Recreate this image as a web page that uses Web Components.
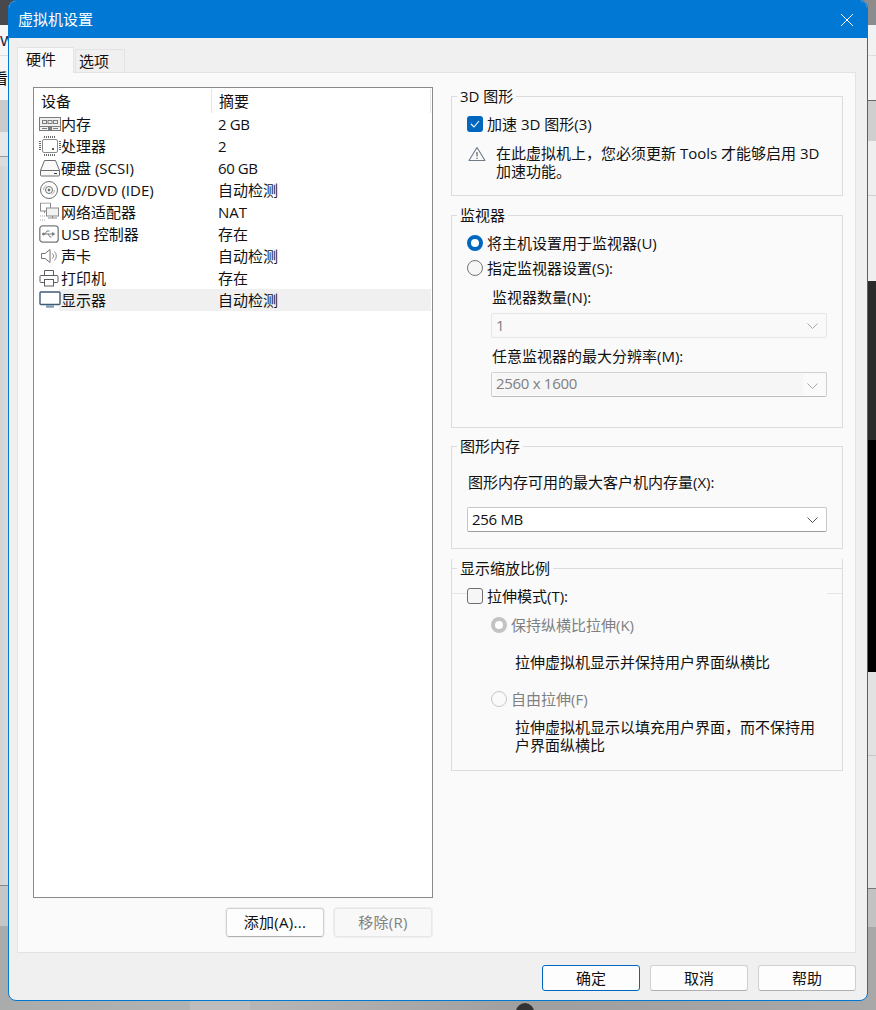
<!DOCTYPE html>
<html lang="zh"><head><meta charset="utf-8"><style>
html,body{margin:0;padding:0;width:876px;height:1010px;overflow:hidden;background:#9a9a9a}
body{font:15px/18px "Open Sans","Noto Sans CJK SC",sans-serif;color:#111;position:relative}
</style></head><body>
<vm-desktop>
<vm-dialog heading="虚拟机设置">
  <vm-tabs slot="tabs"></vm-tabs>
  <vm-devices slot="left"></vm-devices>
  <vm-group slot="right" label="3D 图形" style="height:100px">
    <vm-check checked style="margin:18px 0 0 15px">加速 3D 图形(3)</vm-check>
    <vm-warning style="margin:11px 0 0 16px">在此虚拟机上，您必须更新 Tools 才能够启用 3D 加速功能。</vm-warning>
  </vm-group>
  <vm-group slot="right" label="监视器" style="height:213px;margin-top:19px">
    <vm-radio on style="margin:18px 0 0 15px">将主机设置用于监视器(U)</vm-radio>
    <vm-radio style="margin:7px 0 0 15px">指定监视器设置(S):</vm-radio>
    <vm-field style="margin:11px 15px 0 39px" gap="7" label="监视器数量(N):" value="1" mode="off"></vm-field>
    <vm-field style="margin:9px 15px 0 39px" gap="7" label="任意监视器的最大分辨率(M):" value="2560 x 1600" mode="dim"></vm-field>
  </vm-group>
  <vm-group slot="right" label="图形内存" style="height:103px;margin-top:18px">
    <vm-field style="margin:26px 15px 0 15px" gap="16" label="图形内存可用的最大客户机内存量(X):" value="256 MB" mode="on"></vm-field>
  </vm-group>
  <vm-scale slot="right" style="margin-top:10px"></vm-scale>
  <vm-button slot="actions" primary>确定</vm-button>
  <vm-button slot="actions">取消</vm-button>
  <vm-button slot="actions">帮助</vm-button>
</vm-dialog>
</vm-desktop>
<script>
function def(name, css, html, init){
  customElements.define(name, class extends HTMLElement{
    connectedCallback(){
      if(this.shadowRoot) return;
      const r=this.attachShadow({mode:'open'});
      r.innerHTML='<style>'+css+'</style>'+(typeof html==='function'?html(this):html);
      if(init) init(r,this);
    }
  });
}
const ICONS={
mem:'<svg width="22" height="14" viewBox="0 0 22 14" fill="none" stroke="#7c7c7c"><rect x=".5" y=".5" width="21" height="13" fill="#f0f0f0"/><rect x="3.5" y="3.5" width="4" height="3"/><rect x="9" y="3.5" width="4" height="3"/><rect x="14.5" y="3.5" width="4" height="3"/><path d="M.5 9.5h21M3 11.5h5M14 11.5h5"/><rect x="9.5" y="10" width="3" height="3.5" fill="#7c7c7c"/></svg>',
cpu:'<svg width="22" height="20" viewBox="0 0 22 20" fill="none" stroke="#6f6f6f"><rect x="3.5" y="3.5" width="15" height="13" rx="1.5" stroke="#8a8a8a"/><path stroke-dasharray="1 1" stroke="#666" stroke-width="2" d="M5 1h12M5 19h12M1 5v10M21 5v10"/><rect x="13" y="12" width="2" height="2" fill="#555" stroke="none"/></svg>',
hdd:'<svg width="22" height="18" viewBox="0 0 22 18" fill="none" stroke="#6c6c6c"><path d="M5.500 1.500h11l4 10v4.500a1 1 0 0 1-1 1h-17a1 1 0 0 1-1-1v-4.500z" fill="#fafafa"/><path d="M1.500 11.500h19"/><path d="M15 14.500h3" stroke="#3a3a3a"/></svg>',
cd:'<svg width="20" height="20" viewBox="0 0 20 20" fill="none" stroke="#6f6f6f"><circle cx="10" cy="10" r="8.500"/><circle cx="10" cy="10" r="3.500"/><circle cx="10" cy="10" r="1" fill="#555"/><path d="M4.500 10a5.500 5.500 0 0 1 3-4.800" stroke="#aaa"/><path d="M15.500 10a5.500 5.500 0 0 1-3 4.800" stroke="#aaa"/></svg>',
net:'<svg width="20" height="19" viewBox="0 0 20 19" fill="none" stroke="#8a8a8a"><rect x="1.500" y=".5" width="10" height="8"/><rect x="7.500" y="5.500" width="12" height="8" fill="#f3f3f3"/><path d="M13.500 13.500v2M9 15.500h9M5.500 8.500v2"/><path d="M1 13.500h5M1 17.500h6" stroke-dasharray="1 1" stroke="#aaa"/></svg>',
usb:'<svg width="20" height="20" viewBox="0 0 20 20" fill="none" stroke="#7a7a7a"><rect x=".8" y="1.800" width="18.400" height="16.400" rx="3" stroke-width="1.300"/><path d="M4.500 10h11M6 10l2-3h2.500M9 10l2 3h1.500M15.500 10l-2-1.500v3z"/><circle cx="4.500" cy="10" r="1" fill="#7a7a7a"/></svg>',
snd:'<svg width="20" height="18" viewBox="0 0 20 18" fill="none" stroke="#747474"><path d="M2.500 6.500h3.500l5-4v13l-5-4h-3.500z"/><path d="M13.500 6.500a3.500 3.500 0 0 1 0 5M15.500 4.500a6.500 6.500 0 0 1 0 9" stroke="#909090"/></svg>',
prn:'<svg width="20" height="18" viewBox="0 0 20 18" fill="none" stroke="#5e5e5e"><path d="M5.500 6.500v-5h9v5"/><path d="M5 13.500h-3a1 1 0 0 1-1-1v-5a1 1 0 0 1 1-1h16a1 1 0 0 1 1 1v5a1 1 0 0 1-1 1h-3"/><rect x="5.500" y="10.500" width="9" height="6.500"/></svg>',
mon:'<svg width="22" height="18" viewBox="0 0 22 18" fill="none"><rect x="1" y="1" width="20" height="12.500" rx="1" fill="#fff" stroke="#3d5c78" stroke-width="1.400"/><path d="M7 15.500h8" stroke="#7e9ab0" stroke-width="2.400"/></svg>'};
const ROWS=[['mem','内存','2 GB'],['cpu','处理器','2'],['hdd','硬盘 (SCSI)','60 GB'],['cd','CD/DVD (IDE)','自动检测'],['net','网络适配器','NAT'],['usb','USB 控制器','存在'],['snd','声卡','自动检测'],['prn','打印机','存在'],['mon','显示器','自动检测']];

def('vm-desktop',`:host{display:block;position:absolute;inset:0;overflow:hidden;background:linear-gradient(90deg,#a9acab,#b5b5b5 30%,#9f9f9f 60%,#a8a8a8)}
 .p{position:absolute}`,`
 <div class="p" style="left:0;top:0;width:40px;height:25px;background:#47494c"></div>
 <div class="p" style="left:0;top:25px;width:40px;height:75px;background:#f6f6f6"></div>
 <div class="p" style="left:0;top:32px;font:15px 'Liberation Sans';color:#224">W</div>
 <div class="p" style="left:-7px;top:67px;font:15px 'Noto Sans CJK SC';color:#000">看</div>
 <div class="p" style="left:0;top:55px;width:40px;height:1px;background:#ddd"></div>
 <div class="p" style="left:0;top:100px;width:40px;height:32px;background:#cbcbcb"></div>
 <div class="p" style="left:0;top:132px;width:40px;height:24px;background:#e8e8e8"></div>
 <div class="p" style="left:0;top:156px;width:40px;height:10px;background:#dcdcdc;border-top:1px solid #999"></div>
 <div class="p" style="left:0;top:166px;width:40px;height:719px;background:linear-gradient(90deg,#d4d4d4,#efefef);border-bottom:1px solid #888"></div>
 <div class="p" style="left:0;top:886px;width:40px;height:40px;background:#c6c6c6"></div>
 <div class="p" style="left:840px;top:0;width:36px;height:25px;background:#8c8c8c"></div>
 <div class="p" style="left:840px;top:25px;width:36px;height:75px;background:#f2f2f2;border-bottom:1px solid #666"></div>
 <div class="p" style="left:840px;top:55px;width:36px;height:1px;background:#ddd"></div>
 <div class="p" style="left:840px;top:101px;width:36px;height:40px;background:#cfcfcf"></div>
 <div class="p" style="left:840px;top:141px;width:36px;height:140px;background:#efefef"></div>
 <div class="p" style="left:840px;top:195px;width:36px;height:1px;background:#d0d0d0"></div>
 <div class="p" style="left:840px;top:281px;width:36px;height:159px;background:#2b2b2b"></div>
 <div class="p" style="left:840px;top:440px;width:36px;height:232px;background:#000"></div>
 <div class="p" style="left:840px;top:672px;width:36px;height:216px;background:#e2e2e2"></div>
 <div class="p" style="left:840px;top:755px;width:36px;height:1px;background:#c8c8c8"></div>
 <div class="p" style="left:840px;top:888px;width:36px;height:38px;background:#c2c2c2;border-top:1px solid #777"></div>
 <div class="p" style="left:516px;top:1003px;width:18px;height:10px;background:#333;border-radius:10px 10px 0 0"></div>
 <div class="p" style="left:190px;top:1001px;width:60px;height:10px;background:#bdbdbd"></div>
 <slot></slot>`);

def('vm-dialog',`:host{display:flex;flex-direction:column;position:absolute;left:8px;top:0;width:860px;height:1001px;box-sizing:border-box;background:#f0f0f0;border:1px solid #0078d4;border-radius:8px;overflow:hidden}
 .title{flex:none;height:37px;margin:0 -1px;background:#0078d4;color:#fff;display:flex;align-items:center;justify-content:space-between;padding:0 14px 2px 10px;box-sizing:border-box}
 .title svg{margin-top:2px}
 .body{flex:1;display:flex;flex-direction:column;padding:9px 11px 0 8px}
 .panel{height:881px;box-sizing:border-box;margin-top:-1px;background:#fafafa;border:1px solid #e3e3e3;display:flex;padding:14px 12px 0 15px;}
 .l{width:400px;flex:none}.r{margin-left:18px;width:392px;padding-top:9px;display:flex;flex-direction:column}
 .act{display:flex;justify-content:flex-end;gap:10px;padding:12px 0 0 0}`,
 h=>`<div class="title"><span>${h.getAttribute('heading')}</span>
 <svg width="14" height="14" viewBox="0 0 14 14" stroke="#fff" fill="none"><path d="M1 1l12 12M13 1L1 13"/></svg></div>
 <div class="body"><slot name="tabs"></slot><div class="panel"><div class="l"><slot name="left"></slot></div><div class="r"><slot name="right"></slot></div></div>
 <div class="act"><slot name="actions"></slot></div></div>`);

def('vm-tabs',`:host{display:flex;align-items:flex-end;height:26px;position:relative;z-index:1}
 .t{box-sizing:border-box;display:flex;align-items:center}
 .a{width:57px;height:26px;background:#fafafa;border:1px solid #e3e3e3;border-bottom:0;padding:0 0 4px 8px}
 .b{width:50px;height:24px;margin:0 0 0 1px;border:1px solid #e3e3e3;background:#f0f0f0;padding-left:3px}`,
 `<div class="t a">硬件</div><div class="t b">选项</div>`);

def('vm-devices',`:host{display:block}
 .box{height:811px;box-sizing:border-box;border:1px solid #8a8a8a;background:#fff;padding:1px 1px 0 1px}
 .hd,.row{display:grid;grid-template-columns:176px 1fr;height:22px;align-items:center}
 .hd{height:24px;position:relative}
 .hd span+span{border-left:1px solid #e5e5e5;padding-left:7px;height:24px;line-height:24px}
 .hd span:first-child{padding-left:6px}
 .hd::after{content:"";position:absolute;right:0;top:0;height:24px;border-right:1px solid #e5e5e5}
 .row span+span{padding-left:7px}
 .row span.v{letter-spacing:-.4px}
 .n{display:flex;align-items:center;position:relative;padding-left:26px;height:22px}
 .n svg{position:absolute;left:4px;top:50%;transform:translateY(-50%)}
 .row.s{background:linear-gradient(90deg,#fff 24px,#f0f0f0 24px)}
 .btns{display:flex;justify-content:flex-end;gap:10px;padding:10px 1px 0 0}`,
 ()=>`<div class="box"><div class="hd"><span>设备</span><span>摘要</span></div>`+
 ROWS.map((r,i)=>`<div class="row${i==8?' s':''}"><span class="n">${ICONS[r[0]]}${r[1]}</span><span${/GB/.test(r[2])?' class="v"':''}>${r[2]}</span></div>`).join('')+
 `</div><div class="btns"><vm-button small>添加(A)...</vm-button><vm-button small disabled>移除(R)</vm-button></div>`);

def('vm-group',`:host{display:block;box-sizing:border-box;border:1px solid #dcdcdc;position:relative}
 .lg{position:absolute;left:5px;top:-10px;background:#fafafa;padding:0 3px;line-height:18px}
 .c{display:flex;flex-direction:column}`,
 h=>`<div class="lg">${h.getAttribute('label')}</div><div class="c"><slot></slot></div>`);

def('vm-check',`:host{display:flex;align-items:center;gap:4px;height:18px}
 .b{width:16px;height:16px;box-sizing:border-box;border-radius:3px;display:flex;align-items:center;justify-content:center}
 .on{background:#0067c0}.off{background:#f6f6f6;border:1px solid #6e6e6e}`,
 h=>`<div class="b ${h.hasAttribute('checked')?'on':'off'}">${h.hasAttribute('checked')?'<svg width="10" height="8" viewBox="0 0 10 8" fill="none" stroke="#fff" stroke-width="1.100"><path d="M1 4l3 3 5-6"/></svg>':''}</div><span><slot></slot></span>`);

def('vm-radio',`:host{display:flex;align-items:center;gap:4px;height:18px}
 .o{width:16px;height:16px;box-sizing:border-box;border-radius:50%}
 .on{border:4.500px solid #0067c0;background:#fff}.off{border:1px solid #767676;background:#f6f6f6}
 :host([mute]) {color:#808080}
 :host([mute]) .on{border-color:#c3c3c3}:host([mute]) .off{border-color:#c8c8c8;background:#fafafa}`,
 h=>`<div class="o ${h.hasAttribute('on')?'on':'off'}"></div><span><slot></slot></span>`);

def('vm-warning',`:host{display:flex;gap:10px;align-items:flex-start}
 svg{flex:none;margin-top:2px}.t{width:330px;line-height:18px}`,
 `<svg width="18" height="16" viewBox="0 0 18 16" fill="none"><path d="M9 1.500L17 14.500H1z" stroke="#6e7a86" stroke-width="1.100" stroke-linejoin="round"/><path d="M9 6v4.500M9 11.800v1.300" stroke="#555" stroke-width="1.100"/></svg><div class="t"><slot></slot></div>`);

def('vm-field',`:host{display:block}
 .s{height:25px;box-sizing:border-box;border-radius:2px;display:flex;align-items:center;justify-content:space-between;padding:0 8px 2px 3px}
 .s span{padding-left:1px;letter-spacing:-.3px}
 .s svg{margin-top:2px}
 .l{padding-left:1px}
 .on{background:#fff;border:1px solid #c8c8c8;border-bottom-color:#9c9c9c}
 .off{background:#f9f9f9;border:1px solid #e6e6e6;color:#808080}
 .dim{background:#fafafa;border:1px solid #d0d0d0;border-bottom-color:#bdbdbd;color:#808080;padding-bottom:0}
 .dim span{width:307px;height:21px;line-height:19px;background:#f6f6f6}`,
 h=>{const m=h.getAttribute('mode'),g=h.getAttribute('gap');
 return `<div class="l">${h.getAttribute('label')}</div><div class="s ${m}" style="margin-top:${g||6}px"><span>${h.getAttribute('value')}</span><svg width="11" height="6" viewBox="0 0 11 6" fill="none" stroke="${m=='on'?'#555':'#a8a8a8'}"><path d="M.5.500l5 5 5-5"/></svg></div>`});

def('vm-scale',`:host{display:block;position:relative;height:212px;box-sizing:border-box;border:1px solid #dcdcdc;border-top:0}
 .top{position:absolute;left:-1px;right:-1px;top:9px;height:1px;background:#dcdcdc}
 .lg{position:absolute;left:5px;top:0;background:#fafafa;padding:0 3px;line-height:18px}
 .l2{position:absolute;left:0;right:0;top:34px;height:1px;background:#e6e6e6}
 .c{position:relative;padding:28px 0 0 15px}
 .d{margin-left:48px;line-height:18px}`,
 `<div class="top"></div><div class="lg">显示缩放比例</div><div class="l2"></div>
 <div class="c"><vm-check style="background:#fafafa;width:360px">拉伸模式(T):</vm-check>
 <vm-radio on mute style="margin:11px 0 0 24px">保持纵横比拉伸(K)</vm-radio>
 <div class="d" style="margin-top:19px">拉伸虚拟机显示并保持用户界面纵横比</div>
 <vm-radio mute style="margin:19px 0 0 24px">自由拉伸(F)</vm-radio>
 <div class="d" style="margin-top:10px;width:305px">拉伸虚拟机显示以填充用户界面，而不保持用户界面纵横比</div></div>`);

def('vm-button',`:host{display:block}
 button{all:unset;display:flex;align-items:center;justify-content:center;box-sizing:border-box;width:98px;height:26px;background:#fdfdfd;border:1px solid #d0d0d0;border-bottom-color:#b0b0b0;border-radius:3px;font:inherit;color:#111;padding-bottom:1px}
 :host([primary]) button{border:1px solid #0067c0;border-bottom-width:1.500px}
 :host([small]) button{height:29px;outline:1px solid #eee;padding-bottom:2px;letter-spacing:.3px}
 :host([disabled]) button{background:#f8f8f8;border-color:#e8e8e8;color:#808080}`,
 `<button><slot></slot></button>`);
</script>
</body></html>
